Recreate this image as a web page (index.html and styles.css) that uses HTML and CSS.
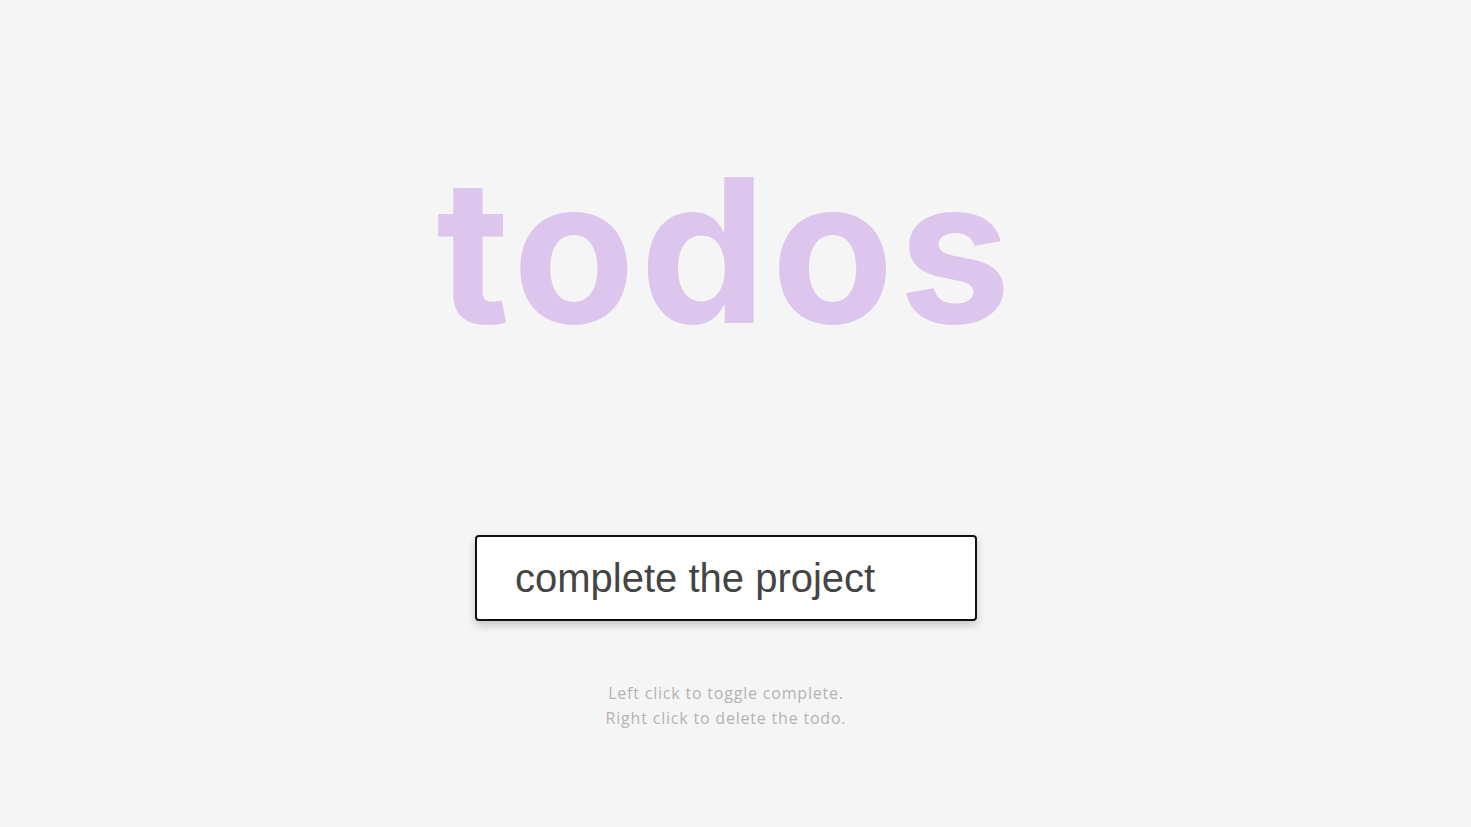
FILE: index.html
```html
<!DOCTYPE html>
<html lang="en">
<head>
<meta charset="utf-8">
<title>todos</title>
<link rel="stylesheet" href="styles.css">
</head>
<body>
<main class="app">
  <h1 class="title">todos</h1>
  <form class="form">
    <input class="todo-input" type="text" value="complete the project" autocomplete="off">
  </form>
  <p class="hint">Left click to toggle complete.<br>Right click to delete the todo.</p>
</main>
</body>
</html>
```
FILE: styles.css
```css
* { box-sizing: border-box; }
html, body { margin: 0; padding: 0; }
body {
  background: #f5f5f5;
  font-family: "Inter", "Open Sans", sans-serif;
  color: #444;
  min-height: 100vh;
}
.app {
  display: flex;
  flex-direction: column;
  align-items: center;
  padding-right: 19px;
}
.title {
  margin: 150px 0 0;
  font-size: 200px;
  line-height: 1;
  font-weight: 700;
  letter-spacing: 5px;
  color: #dcc6ed;
  height: 385px;
}
.form {
  width: 502px;
  margin: 0;
  box-shadow: 0 4px 10px rgba(0, 0, 0, 0.2);
  border-radius: 4px;
}
.todo-input {
  display: block;
  width: 100%;
  height: 86px;
  border: 2px solid #111;
  border-radius: 4px;
  background: #fff;
  padding: 0 38px;
  font-family: "Liberation Sans", Arial, sans-serif;
  font-size: 40px;
  color: #444;
  outline: none;
}
.hint {
  margin: 60px 0 0;
  text-align: center;
  font-family: "Open Sans", sans-serif;
  font-size: 16px;
  letter-spacing: 0.8px;
  line-height: 25px;
  color: #b3b3b3;
}
```
